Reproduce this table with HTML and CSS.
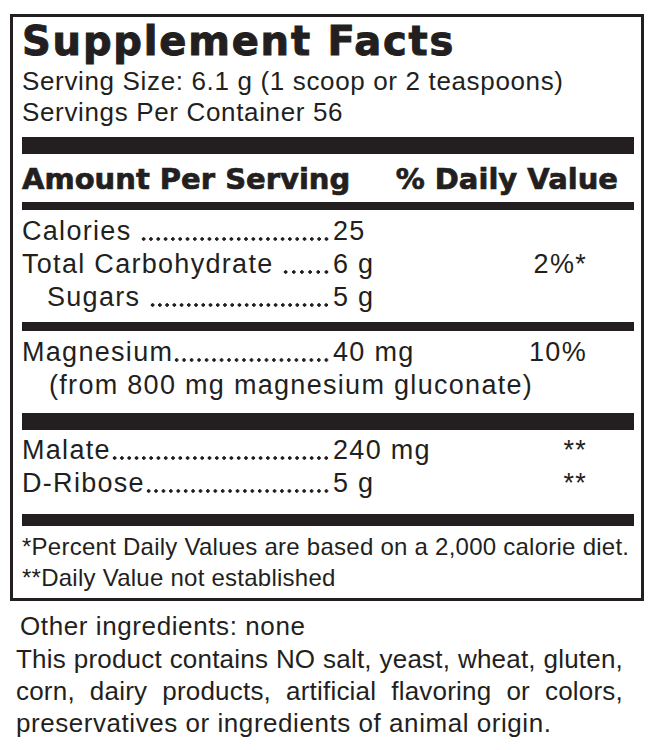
FILE: index.html
```html
<!DOCTYPE html>
<html lang="en">
<head>
<meta charset="utf-8">
<title>Supplement Facts</title>
<link rel="stylesheet" href="styles.css">
</head>
<body>
<div class="label">
  <div class="facts">
    <h1 class="title">Supplement Facts</h1>
    <div class="serving">Serving Size: 6.1 g (1 scoop or 2 teaspoons)</div>
    <div class="serving">Servings Per Container 56</div>
    <div class="bar bar-thick bar-1"></div>
    <div class="head">
      <span>Amount Per Serving</span>
      <span>% Daily Value</span>
    </div>
    <div class="bar bar-mid"></div>
    <div class="group group-1">
      <div class="row"><div class="left"><span class="name">Calories&nbsp;</span><span class="lead"></span></div><span class="amt">25</span><span class="dv"></span></div>
      <div class="row"><div class="left"><span class="name">Total Carbohydrate&nbsp;</span><span class="lead"></span></div><span class="amt">6 g</span><span class="dv">2%*</span></div>
      <div class="row"><div class="left indent"><span class="name">Sugars&nbsp;</span><span class="lead"></span></div><span class="amt">5 g</span><span class="dv"></span></div>
    </div>
    <div class="bar bar-3"></div>
    <div class="group group-2">
      <div class="row"><div class="left"><span class="name">Magnesium</span><span class="lead"></span></div><span class="amt">40 mg</span><span class="dv">10%</span></div>
      <div class="sub">(from 800 mg magnesium gluconate)</div>
    </div>
    <div class="bar bar-thick bar-4"></div>
    <div class="group group-3">
      <div class="row"><div class="left"><span class="name">Malate</span><span class="lead"></span></div><span class="amt">240 mg</span><span class="dv">**</span></div>
      <div class="row"><div class="left"><span class="name">D-Ribose</span><span class="lead"></span></div><span class="amt">5 g</span><span class="dv">**</span></div>
    </div>
    <div class="bar bar-5"></div>
    <div class="notes">
      <div>*Percent Daily Values are based on a 2,000 calorie diet.</div>
      <div>**Daily Value not established</div>
    </div>
  </div>
  <div class="other">Other ingredients: none</div>
  <div class="free">
    <div class="jl">This product contains NO salt, yeast, wheat, gluten,</div>
    <div class="jl">corn, dairy products, artificial flavoring or colors,</div>
    <div class="last">preservatives or ingredients of animal origin.</div>
  </div>
</div>
</body>
</html>
```
FILE: styles.css
```css
html, body {
  margin: 0;
  padding: 0;
  background: #ffffff;
}
body {
  font-family: "Liberation Sans", Arial, sans-serif;
  color: #231f20;
  width: 658px;
  height: 750px;
  overflow: hidden;
}
.label {
  padding: 14px 0 0 10px;
}
.facts {
  width: 612px;
  border: 3px solid #231f20;
  padding: 2px 7px 5px 9px;
}
.title {
  margin: 0;
  font-family: "DejaVu Sans", sans-serif;
  font-weight: bold;
  font-size: 40px;
  line-height: 44px;
  letter-spacing: 1.8px;
  white-space: nowrap;
  -webkit-text-stroke: 1px #231f20;
}
.serving {
  font-size: 26px;
  line-height: 31px;
  letter-spacing: 0.65px;
  white-space: nowrap;
}
.title + .serving {
  margin-top: 3px;
}
.bar {
  background: #231f20;
  height: 9px;
}
.bar-thick {
  height: 17px;
}
.bar-1 {
  margin-top: 9px;
}
.bar-mid {
  height: 8px;
  margin-top: 5px;
}
.head {
  margin-top: 8px;
  display: flex;
  justify-content: space-between;
  padding-right: 16px;
  font-family: "DejaVu Sans", sans-serif;
  font-weight: bold;
  font-size: 29px;
  line-height: 35px;
  white-space: nowrap;
  -webkit-text-stroke: 0.7px #231f20;
}
.group {
  font-size: 27px;
  line-height: 33px;
  letter-spacing: 1.3px;
}
.group-1 {
  margin-top: 5px;
}
.bar-3 {
  margin-top: 8px;
}
.group-2 {
  margin-top: 5px;
}
.bar-4 {
  margin-top: 11px;
}
.group-3 {
  margin-top: 4px;
}
.bar-5 {
  height: 12px;
  margin-top: 14px;
}
.row {
  display: grid;
  grid-template-columns: 310px 1fr auto;
  padding-right: 47px;
  white-space: nowrap;
}
.left {
  display: flex;
}
.indent {
  padding-left: 25px;
}
.name {
  flex: none;
}
.lead {
  flex: 1;
  min-width: 0;
  margin-right: 2px;
  background-image: radial-gradient(circle, #231f20 1.5px, rgba(35, 31, 32, 0) 2px);
  background-size: 7.2px 4px;
  background-repeat: space no-repeat;
  background-position: left 0 top 22px;
}
.amt {
  padding-left: 1px;
}
.dv {
  text-align: right;
}
.sub {
  padding-left: 27px;
  white-space: nowrap;
}
.notes {
  margin-top: 5px;
  font-size: 24px;
  line-height: 31px;
  letter-spacing: 0.25px;
  white-space: nowrap;
}
.other {
  margin-top: 9px;
  padding-left: 10px;
  font-size: 26px;
  line-height: 33px;
  letter-spacing: 0.6px;
}
.free {
  width: 607px;
  padding-left: 6px;
  font-size: 26px;
  line-height: 32px;
  letter-spacing: 0.2px;
}
.jl {
  text-align: justify;
  text-align-last: justify;
  white-space: nowrap;
}
.last {
  text-align: left;
  letter-spacing: 0.55px;
  white-space: nowrap;
}
```
